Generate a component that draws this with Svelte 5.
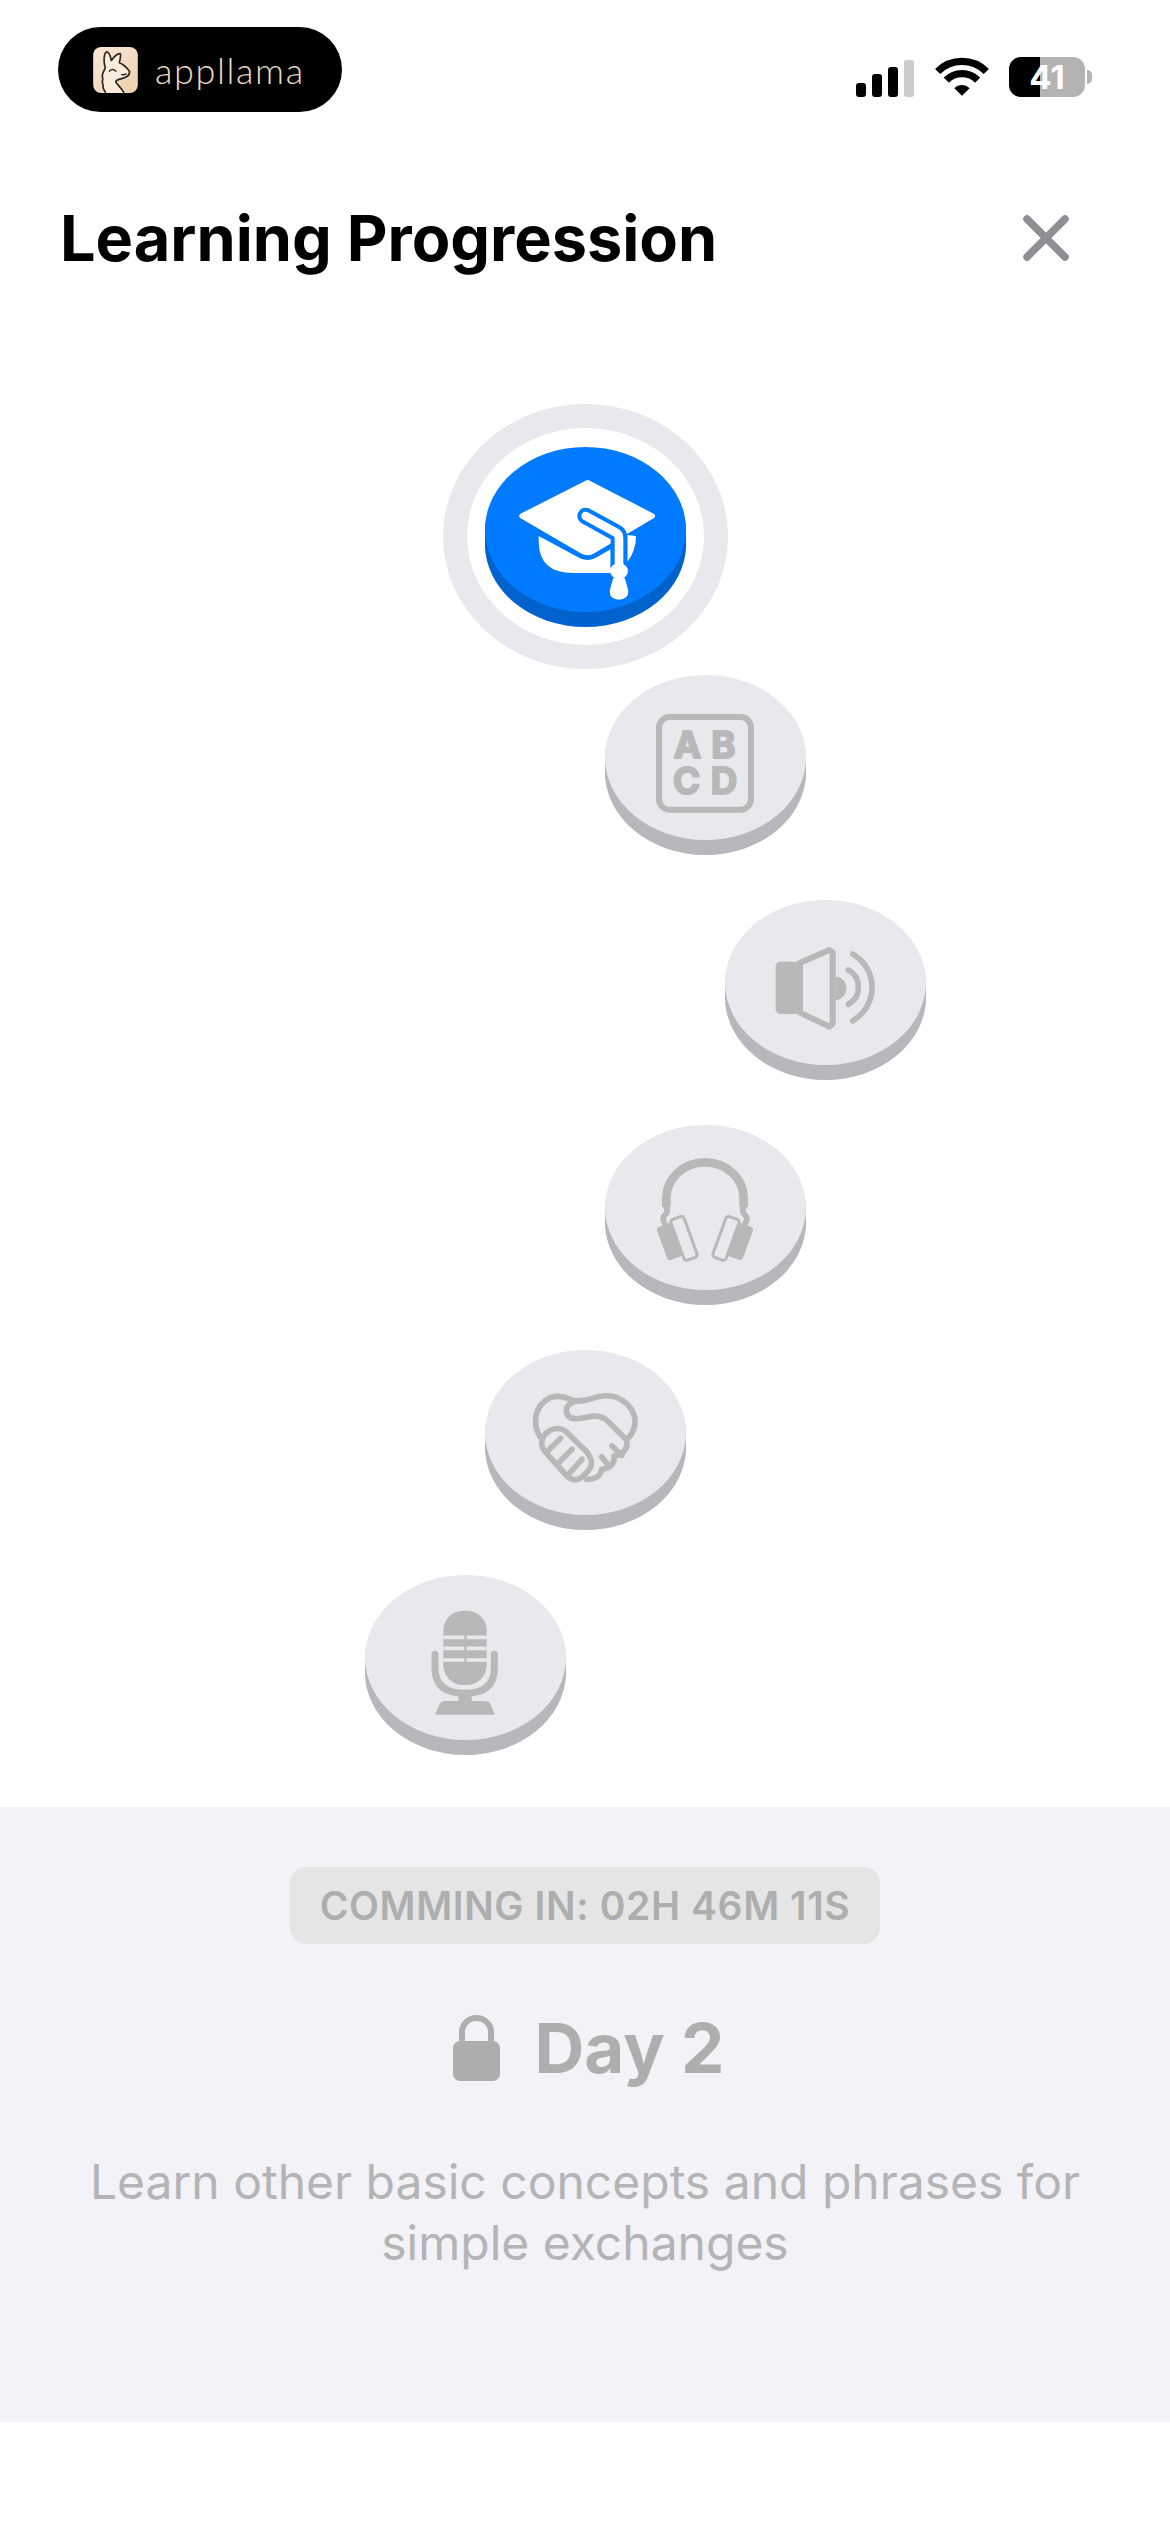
<script>
	// Lessons on the path, x is the sideways offset from the centre line
	const nodes = [
		{ icon: 'letters', x: 120 },
		{ icon: 'speaker', x: 240 },
		{ icon: 'headphones', x: 120 },
		{ icon: 'handshake', x: 0 },
		{ icon: 'mic', x: -120 }
	]
</script>


<div class="page">
	<div class="status">
		<div class="pill">
			<svg class="llama" viewBox="160 108 133 137">
				<defs>
					<linearGradient id="tile" x1="0" y1="0" x2="1" y2="1">
						<stop offset="0" stop-color="#f9e9d7" />
						<stop offset="1" stop-color="#eccfae" />
					</linearGradient>
				</defs>
				<rect x="160" y="108" width="133" height="137" rx="24" fill="url(#tile)" />
				<path class="llama-line" d="M197 245 C194 235 186 232 190 222 C184 214 190 206 188 198 C184 190 192 182 196 170 C190 150 192 125 201 122 C210 125 212 140 214 148 C220 140 232 125 241 128 C243 140 238 150 238 155 C250 160 262 172 268 180 C270 192 262 198 245 202 C232 205 226 208 228 214 C236 224 246 232 252 245" />
				<path class="llama-line thin" d="M208 180 Q218 170 228 180 M245 190 Q252 192 258 188" />
			</svg>
			<span class="wordmark">appllama</span>
		</div>

		<div class="indicators">
			<svg class="signal" viewBox="0 0 58 37">
				<rect x="0" y="23" width="10" height="14" rx="3" />
				<rect x="16" y="14" width="10" height="23" rx="3" />
				<rect x="32" y="7" width="10" height="30" rx="3" />
				<rect class="off" x="48" y="0" width="10" height="37" rx="3" />
			</svg>
			<svg class="wifi" viewBox="290 55 150 113">
				<path d="M292 95 A103 103 0 0 1 438 95 M318 121 A66 66 0 0 1 412 121" />
				<path class="wedge" d="M365 168 L342 145 A33 33 0 0 1 388 145 Z" />
			</svg>
			<div class="battery-wrap">
				<div class="battery">41</div>
				<div class="battery-cap"></div>
			</div>
		</div>
	</div>

	<div class="header">
		<h1>Learning Progression</h1>
		<svg class="close" viewBox="0 0 46 46">
			<path d="M4 4 L42 42 M42 4 L4 42" />
		</svg>
	</div>

	<div class="path">
		<div class="ring">
			<div class="node active">
				<svg viewBox="195 198 603 495">
					<path class="cap-board" d="M503 305 L697 405 L515 512 Q503 518 490 512 L306 405 Z" />
					<path class="cap-fill" d="M356 465 L480 532 Q503 542 525 532 L572 505 L572 576 L460 576 Q356 576 356 480 Z" />
					<path class="cap-fill" d="M622 462 L648 465 Q648 510 622 542 Z" />
					<path class="cap-strap-edge" d="M497 405 L588 455 Q597 460 597 472 L597 560" />
					<path class="cap-strap" d="M497 405 L588 455 Q597 460 597 472 L597 575" />
					<ellipse class="cap-fill" cx="597" cy="570" rx="27" ry="23" />
					<path class="cap-fill" d="M580 590 L614 590 Q620 610 625 630 Q625 656 597 656 Q569 656 569 630 Q574 610 580 590 Z" />
				</svg>
			</div>
		</div>

		{#each nodes as node}
			<div class="node" style="--x: {node.x}px">
				{#if node.icon === 'letters'}
					<svg viewBox="45 45 603 495">
						<rect class="line" x="207" y="171" width="276" height="278" rx="32" />
						<text x="292" y="295">A</text>
						<text x="400" y="295">B</text>
						<text x="290" y="403">C</text>
						<text x="402" y="403">D</text>
					</svg>
				{:else if node.icon === 'speaker'}
					<svg viewBox="405 720 603 495">
						<rect class="solid" x="557" y="905" width="90" height="157" rx="14" />
						<path class="cone" d="M630 908 L718 870 L728 878 L728 1092 L718 1100 L630 1058 Z" />
						<path class="solid" d="M737 950 A32 35 0 0 1 737 1020 Z" />
						<path class="arc" d="M775 930 A59 59 0 0 1 775 1033 M788 882 A115 115 0 0 1 788 1082" />
					</svg>
				{:else if node.icon === 'headphones'}
					<svg viewBox="45 45 603 495">
						<path class="band" d="M229 292 L229 265 A116 108 0 0 1 461 265 L461 292" />
						<path class="arc" d="M229 292 Q236 305 226 314 Q214 324 224 340 M461 292 Q454 305 464 314 Q476 324 466 340" />
						<rect class="solid" x="215" y="342" width="50" height="105" rx="10" transform="rotate(-20 240 395)" />
						<rect class="pad" x="261" y="320" width="42" height="130" rx="9" transform="rotate(-20 282 385)" />
						<rect class="solid" x="425" y="342" width="50" height="105" rx="10" transform="rotate(20 450 395)" />
						<rect class="pad" x="387" y="320" width="42" height="130" rx="9" transform="rotate(20 408 385)" />
					</svg>
				{:else if node.icon === 'handshake'}
					<svg viewBox="45 30 603 495">
						<path class="shake" d="M210 290 C185 250 195 195 240 173 C265 165 285 170 300 178 C320 186 350 182 385 170 C440 158 485 190 495 235 C498 265 485 285 470 300 C475 325 460 345 432 348 C435 372 420 385 395 388 C392 410 370 420 350 418" />
						<path class="shake" d="M340 182 C300 180 285 200 290 220 C298 240 325 238 350 232 C380 224 400 230 415 245 L465 295" />
						<path class="shake" d="M218 295 C230 268 262 258 285 272 L345 330 C368 355 370 378 352 395 L335 412 C318 425 298 418 288 405 L225 335 C215 322 212 308 218 295 Z" />
						<path class="shake" d="M236 330 L272 295 M268 366 L306 328 M300 398 L336 358 M395 350 L415 376 M426 318 L456 346" />
					</svg>
				{:else if node.icon === 'mic'}
					<svg viewBox="45 45 603 495">
						<rect class="solid" x="280" y="152" width="130" height="223" rx="60" />
						<path class="mic-slot" d="M280 232 H343 M350 232 H410 M280 265 H343 M350 265 H410 M280 300 H343 M350 300 H410" />
						<path class="band thin" d="M255 283 L255 325 Q255 400 345 400 Q433 400 433 325 L433 283" />
						<rect class="solid" x="325" y="395" width="40" height="35" />
						<path class="solid base" d="M285 425 L405 425 Q415 425 420 435 L432 462 L258 462 L270 435 Q275 425 285 425 Z" />
					</svg>
				{/if}
			</div>
		{/each}
	</div>

	<div class="panel">
		<div class="chip">COMMING IN: 02H 46M 11S</div>
		<div class="day">
			<svg class="lock" viewBox="0 0 47 66">
				<path class="shackle" d="M9 28 V17 A14.5 14 0 0 1 38 17 V28" />
				<rect x="0" y="26" width="47" height="40" rx="7" />
			</svg>
			<h2>Day 2</h2>
		</div>
		<p>Learn other basic concepts and phrases for simple exchanges</p>
	</div>
</div>


<style>
	:global(body) {
		background: #fff;
	}

	.page {
		width: 1170px;
		height: 2532px;
		overflow: hidden;
		background: #fff;
		font-family: Inter, "Liberation Sans", sans-serif;
	}

	.status {
		display: flex;
		justify-content: space-between;
		padding: 27px 78px 0 58px;
	}
	.pill {
		display: flex;
		align-items: center;
		gap: 17px;
		box-sizing: border-box;
		width: 284px;
		height: 85px;
		padding: 0 0 0 35px;
		border-radius: 43px;
		background: #000;
	}
	.llama {
		width: 45px;
		height: 46px;
	}
	.llama-line {
		fill: #f9ecdc;
		stroke: #2b2620;
		stroke-width: 5;
		stroke-linejoin: round;
	}
	.llama-line.thin {
		fill: none;
		stroke-width: 4;
		stroke-linecap: round;
	}
	.wordmark {
		font-family: Lato, sans-serif;
		font-weight: 300;
		font-size: 36px;
		letter-spacing: 1.6px;
		color: #ecd9c3;
		line-height: 1;
	}

	.indicators {
		display: flex;
		align-items: center;
		height: 40px;
		margin-top: 30px;
	}
	.signal {
		width: 58px;
		height: 37px;
		margin-top: 2px;
		margin-right: 23px;
	}
	.signal .off {
		fill: #cbcbcb;
	}
	.wifi {
		width: 50px;
		height: 38px;
		margin-right: 22px;
		overflow: visible;
	}
	.wifi path {
		fill: none;
		stroke: #000;
		stroke-width: 22;
	}
	.wifi .wedge {
		fill: #000;
		stroke: none;
	}
	.battery-wrap {
		display: flex;
		align-items: center;
		gap: 2px;
	}
	.battery {
		width: 76px;
		height: 40px;
		border-radius: 12px;
		background: linear-gradient(90deg, #000 31px, #b3b3b3 31px);
		color: #fff;
		font-weight: 700;
		font-size: 33px;
		line-height: 40px;
		text-align: center;
	}
	.battery-cap {
		width: 5px;
		height: 14px;
		border-radius: 0 7px 7px 0;
		background: #b3b3b3;
	}

	.header {
		display: flex;
		align-items: center;
		justify-content: space-between;
		padding: 88px 101px 0 60px;
	}
	h1 {
		margin: 0;
		font-size: 63px;
		font-weight: 700;
		line-height: 76px;
		color: #000;
	}
	.close {
		width: 46px;
		height: 46px;
	}
	.close path {
		fill: none;
		stroke: #8e8e93;
		stroke-width: 7.5;
		stroke-linecap: round;
	}

	.path {
		display: flex;
		flex-direction: column;
		align-items: center;
		padding: 128px 0 0 1px;
	}
	.ring {
		display: flex;
		align-items: center;
		justify-content: center;
		box-sizing: border-box;
		width: 285px;
		height: 265px;
		margin-bottom: 6px;
		border: 24px solid #e8e8ed;
		border-radius: 50%;
	}
	.node {
		flex: none;
		width: 201px;
		height: 165px;
		margin-bottom: 60px;
		border-radius: 50%;
		background: #e8e8ed;
		box-shadow: 0 3px 0 #b7b7bc, 0 6px 0 #b7b7bc, 0 9px 0 #b7b7bc, 0 12px 0 #b7b7bc, 0 15px 0 #b7b7bc;
		transform: translateX(var(--x, 0));
	}
	.node.active {
		margin: -15px 0 0;
		background: #007aff;
		box-shadow: 0 3px 0 #0062cc, 0 6px 0 #0062cc, 0 9px 0 #0062cc, 0 12px 0 #0062cc, 0 15px 0 #0062cc;
	}
	.node svg {
		display: block;
		width: 100%;
		height: 100%;
	}

	.cap-board {
		fill: #fff;
		stroke: #fff;
		stroke-width: 16;
		stroke-linejoin: round;
	}
	.cap-fill {
		fill: #fff;
	}
	.cap-strap-edge,
	.cap-strap {
		fill: none;
		stroke-linecap: round;
	}
	.cap-strap-edge {
		stroke: #007aff;
		stroke-width: 50;
	}
	.cap-strap {
		stroke: #fff;
		stroke-width: 26;
	}

	.solid {
		fill: #b8b8b8;
	}
	.line {
		fill: none;
		stroke: #b8b8b8;
		stroke-width: 18;
	}
	text {
		font-family: Inter, sans-serif;
		font-size: 110px;
		font-weight: 700;
		text-anchor: middle;
		fill: #b8b8b8;
		stroke: #b8b8b8;
		stroke-width: 6;
		stroke-linejoin: round;
	}
	.cone {
		fill: #e8e8ed;
		stroke: #b8b8b8;
		stroke-width: 18;
		stroke-linejoin: round;
	}
	.arc {
		fill: none;
		stroke: #b8b8b8;
		stroke-width: 17;
		stroke-linecap: round;
	}
	.band {
		fill: none;
		stroke: #b8b8b8;
		stroke-width: 26;
	}
	.band.thin {
		stroke-width: 21;
		stroke-linecap: round;
	}
	.pad {
		fill: #e8e8ed;
		stroke: #b8b8b8;
		stroke-width: 9;
	}
	.shake {
		fill: none;
		stroke: #b8b8b8;
		stroke-width: 17;
		stroke-linecap: round;
		stroke-linejoin: round;
	}
	.mic-slot {
		fill: none;
		stroke: #e8e8ed;
		stroke-width: 11;
	}
	.base {
		stroke: #b8b8b8;
		stroke-width: 4;
		stroke-linejoin: round;
	}

	.panel {
		display: flex;
		flex-direction: column;
		align-items: center;
		box-sizing: border-box;
		height: 615px;
		padding-top: 60px;
		margin-top: 7px;
		background: #f2f2f7;
	}
	.chip {
		display: flex;
		align-items: center;
		justify-content: center;
		width: 590px;
		height: 77px;
		border-radius: 17px;
		background: #e5e5e5;
		color: #aeaeae;
		font-size: 39px;
		font-weight: 600;
		letter-spacing: 0.6px;
	}
	.day {
		display: flex;
		align-items: center;
		gap: 34px;
		margin: 66px 0 0 8px;
		height: 76px;
	}
	.lock {
		width: 47px;
		height: 66px;
		fill: #aeaeae;
	}
	.shackle {
		fill: none;
		stroke: #aeaeae;
		stroke-width: 6;
	}
	h2 {
		margin: 0;
		font-size: 69px;
		font-weight: 700;
		line-height: 76px;
		color: #aeaeae;
	}
	.panel p {
		width: 1010px;
		margin: 65px 0 0;
		font-size: 48px;
		line-height: 61px;
		text-align: center;
		color: #b4b4b6;
	}
</style>
